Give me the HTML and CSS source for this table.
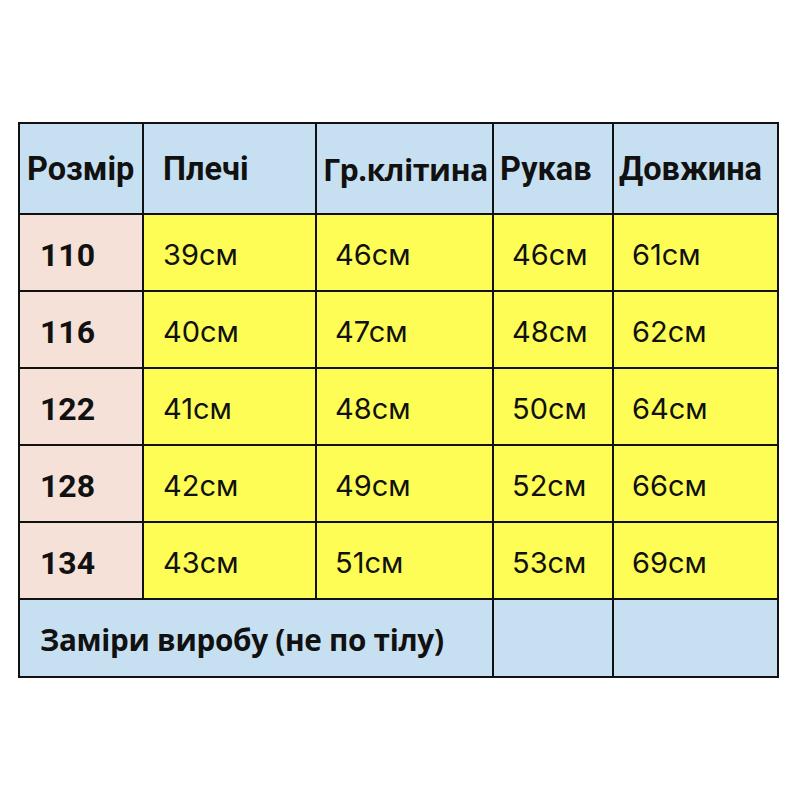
FILE: index.html
```html
<!DOCTYPE html>
<html lang="uk">
<head>
<meta charset="utf-8">
<link rel="stylesheet" href="styles.css">
</head>
<body>
<div class="page">
<table class="sizes">
  <colgroup>
    <col class="c1"><col class="c2"><col class="c3"><col class="c4"><col class="c5">
  </colgroup>
  <tr class="head">
    <th class="h1">Розмір</th>
    <th class="h2">Плечі</th>
    <th class="h3">Гр.клітина</th>
    <th class="h4">Рукав</th>
    <th class="h5">Довжина</th>
  </tr>
  <tr class="row"><td class="size">110</td><td class="v2">39см</td><td class="v3">46см</td><td class="v4">46см</td><td class="v5">61см</td></tr>
  <tr class="row"><td class="size">116</td><td class="v2">40см</td><td class="v3">47см</td><td class="v4">48см</td><td class="v5">62см</td></tr>
  <tr class="row"><td class="size">122</td><td class="v2">41см</td><td class="v3">48см</td><td class="v4">50см</td><td class="v5">64см</td></tr>
  <tr class="row"><td class="size">128</td><td class="v2">42см</td><td class="v3">49см</td><td class="v4">52см</td><td class="v5">66см</td></tr>
  <tr class="row"><td class="size">134</td><td class="v2">43см</td><td class="v3">51см</td><td class="v4">53см</td><td class="v5">69см</td></tr>
  <tr class="foot">
    <td class="note" colspan="3">Заміри виробу (не по тілу)</td>
    <td class="blank"></td>
    <td class="blank"></td>
  </tr>
</table>
</div>
</body>
</html>
```
FILE: styles.css
```css
html, body {
  margin: 0;
  padding: 0;
  background: #ffffff;
}
.page {
  padding: 122px 0 0 18px;
}
.sizes {
  border-collapse: collapse;
  table-layout: fixed;
  width: 759px;
  font-family: "Inter", "Roboto", "Liberation Sans", sans-serif;
  color: #111111;
}
.c1 { width: 124px; }
.c2 { width: 173px; }
.c3 { width: 177px; }
.c4 { width: 120px; }
.c5 { width: 165px; }
.sizes th, .sizes td {
  border: 2px solid #111111;
  padding: 0;
  text-align: left;
  white-space: nowrap;
  overflow: visible;
}
.head th {
  height: 88px;
  background: #c7e0f1;
  font-family: "Roboto", "Inter", "Liberation Sans", sans-serif;
  font-weight: 700;
  font-size: 32.5px;
  padding-top: 1px;
}
.h1 { padding-left: 7px !important; }
.h2 { padding-left: 19px !important; }
.h3 { padding-left: 6px !important; font-family: "Open Sans", "Liberation Sans", sans-serif !important; font-size: 30.5px !important; letter-spacing: -0.55px; }
.h4 { padding-left: 6px !important; }
.h5 { padding-left: 5px !important; }
.row td {
  height: 71px;
  background: #fdfd55;
  font-size: 29px;
  font-weight: 400;
  padding-top: 4px;
}
.row td.size {
  background: #f5e1d7;
  font-family: "Roboto", "Inter", sans-serif;
  font-weight: 700;
  font-size: 32px;
  padding-left: 20px;
}
.v2 { padding-left: 19px !important; }
.v3 { padding-left: 18px !important; }
.v4 { padding-left: 18px !important; }
.v5 { padding-left: 18px !important; }
.foot td {
  height: 73px;
  background: #c7e0f1;
  padding-top: 3px;
}
.note {
  font-weight: 700;
  font-size: 29.7px;
  padding-left: 20px !important;
  font-family: "Open Sans", "Liberation Sans", sans-serif;
  letter-spacing: -0.3px;
}
```
